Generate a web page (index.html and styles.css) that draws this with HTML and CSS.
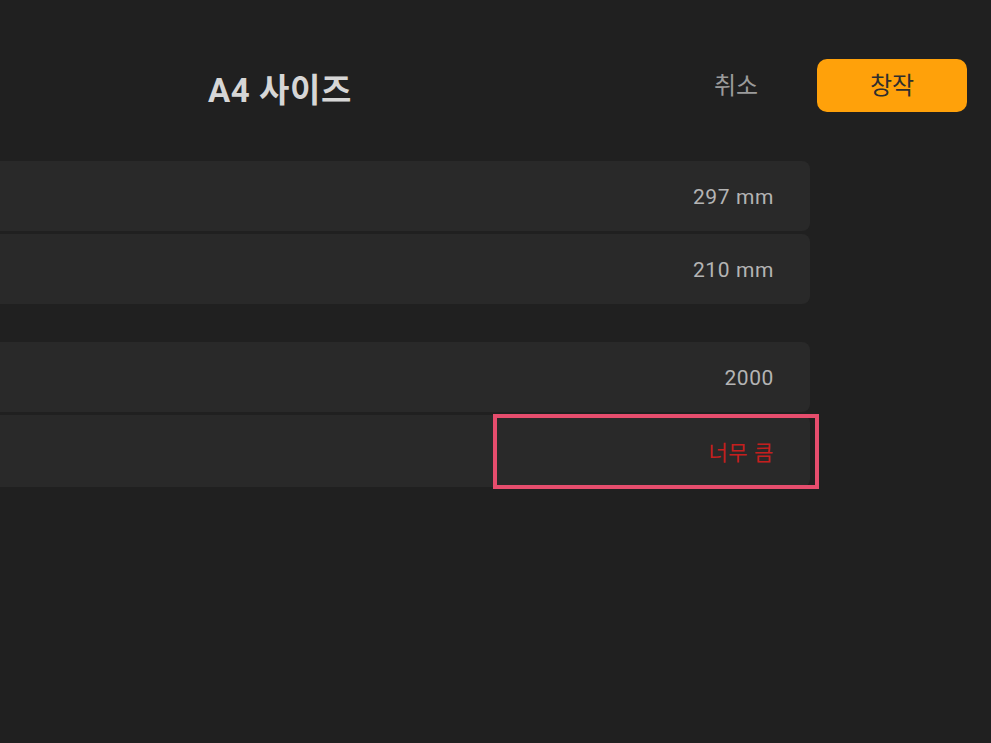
FILE: index.html
```html
<!DOCTYPE html>
<html lang="ko">
<head>
<meta charset="utf-8">
<link rel="stylesheet" href="styles.css">
</head>
<body>
<div class="screen">
  <header class="header">
    <h1 class="title">A4 사이즈</h1>
    <div class="actions">
      <span class="cancel">취소</span>
      <button class="create">창작</button>
    </div>
  </header>
  <section class="group">
    <div class="row"><span class="value">297 mm</span></div>
    <div class="row"><span class="value">210 mm</span></div>
  </section>
  <section class="group">
    <div class="row"><span class="value">2000</span></div>
    <div class="row error-row">
      <span class="value error">너무 큼</span>
      <div class="highlight"></div>
    </div>
  </section>
</div>
</body>
</html>
```
FILE: styles.css
```css
html, body {
  margin: 0;
  padding: 0;
  background: #202020;
}
body {
  font-family: "Roboto", "Noto Sans CJK KR", sans-serif;
  width: 991px;
  height: 743px;
  overflow: hidden;
}
.screen {
  display: flex;
  flex-direction: column;
}
.header {
  display: flex;
  align-items: center;
  padding-top: 59px;
  height: 53px;
}
.title {
  margin: 0;
  width: 560px;
  text-align: center;
  font-size: 33px;
  font-weight: 700;
  color: #d6d6d6;
  position: relative;
  top: 2px;
  letter-spacing: 0.6px;
  white-space: nowrap;
}
.actions {
  display: flex;
  align-items: center;
  margin-left: 154px;
}
.cancel {
  font-size: 24px;
  color: #9b9b9b;
  white-space: nowrap;
  width: 44px;
  position: relative;
  top: -2px;
}
.create {
  margin-left: 59px;
  width: 150px;
  height: 53px;
  border: none;
  border-radius: 10px;
  background: #ffa10a;
  color: #2e2e2e;
  font-family: inherit;
  font-size: 24px;
  font-weight: 400;
  padding: 0 0 5px;
}
.group {
  display: flex;
  flex-direction: column;
  gap: 3px;
  width: 810px;
}
.group:first-of-type {
  margin-top: 49px;
}
.group + .group {
  margin-top: 38px;
}
.row {
  position: relative;
  height: 70px;
  background: #292929;
  border-radius: 0 8px 8px 0;
  display: flex;
  align-items: center;
  justify-content: flex-end;
  padding-right: 36px;
}
.error-row {
  height: 72px;
}
.value {
  font-size: 21px;
  color: #b4b4b4;
  letter-spacing: 0.6px;
  position: relative;
  top: 1px;
}
.value.error {
  color: #c41f1e;
  top: 0;
}
.highlight {
  position: absolute;
  left: 493px;
  top: -1px;
  width: 318px;
  height: 67px;
  border: 4px solid #e64d6d;
}
```
